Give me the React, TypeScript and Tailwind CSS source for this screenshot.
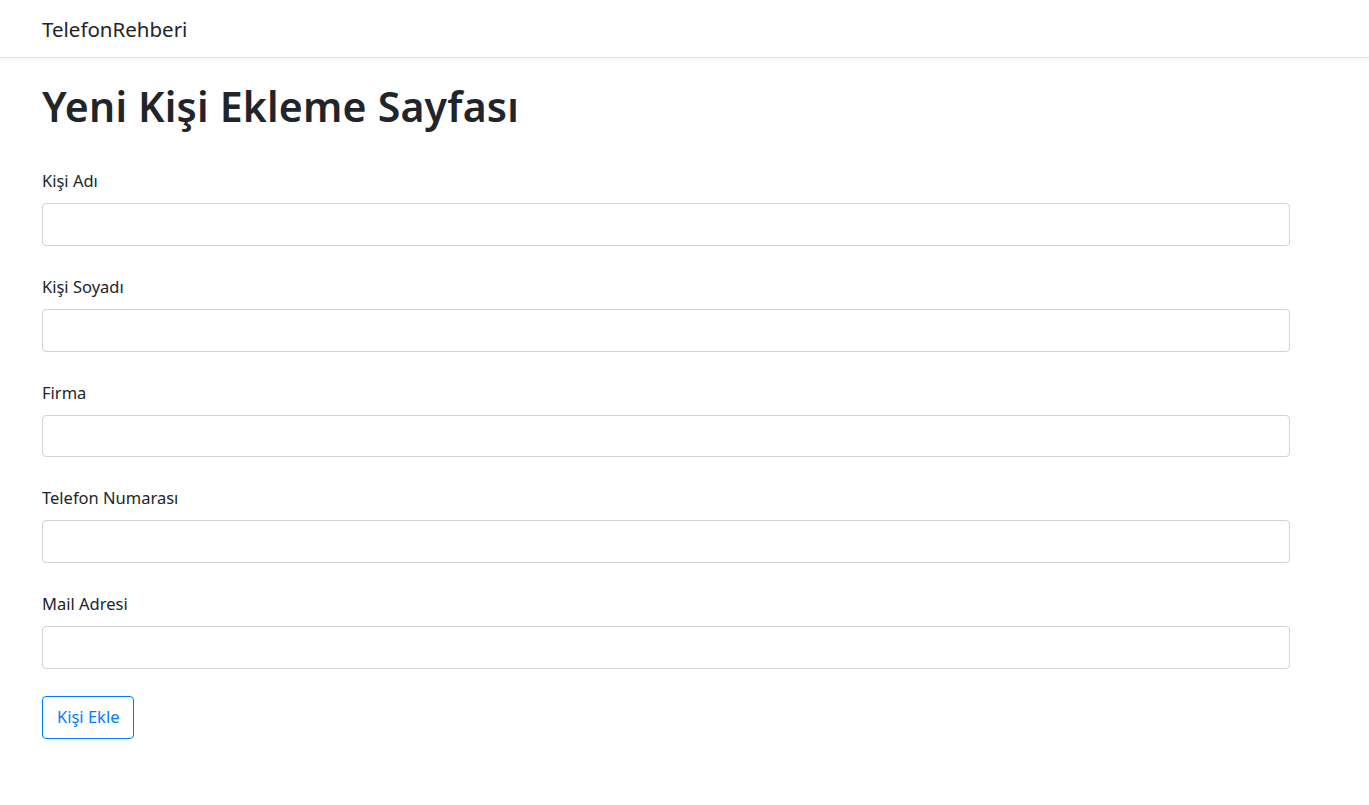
import React from "react";

const fields = ["Kişi Adı", "Kişi Soyadı", "Firma", "Telefon Numarası", "Mail Adresi"];

export default function App() {
  return (
    <div className="min-h-[805px] bg-white text-[#212529] font-['Segoe_UI','Noto_Sans','Open_Sans',sans-serif]">
      <nav className="h-[58px] border-b border-[#dee2e6] bg-white shadow-[0_2px_6px_rgba(0,0,0,0.05)] flex items-center px-[42px]">
        <span className="text-[20.5px] leading-[30px] text-[#212529]">TelefonRehberi</span>
      </nav>
      <main className="ml-[42px] w-[1248px]">
        <h1 className="mt-[24px] text-[41px] leading-[48px] font-semibold tracking-[0.2px]">Yeni Kişi Ekleme Sayfası</h1>
        <form className="mt-[39px] flex flex-col">
          {fields.map((f) => (
            <div key={f} className="mb-[29px] flex flex-col">
              <label className="text-[16.5px] leading-[24px] mb-[10px]">{f}</label>
              <input
                type="text"
                className="h-[42.75px] w-full rounded-[4px] border border-[#ced4da] bg-white px-3 outline-none"
              />
            </div>
          ))}
          <div className="-mt-[2px]">
            <button
              type="button"
              className="h-[43px] px-[14px] rounded-[4px] border border-[#007bff] text-[#007bff] text-[16.5px] leading-[24px] bg-white"
            >
              Kişi Ekle
            </button>
          </div>
        </form>
      </main>
    </div>
  );
}
